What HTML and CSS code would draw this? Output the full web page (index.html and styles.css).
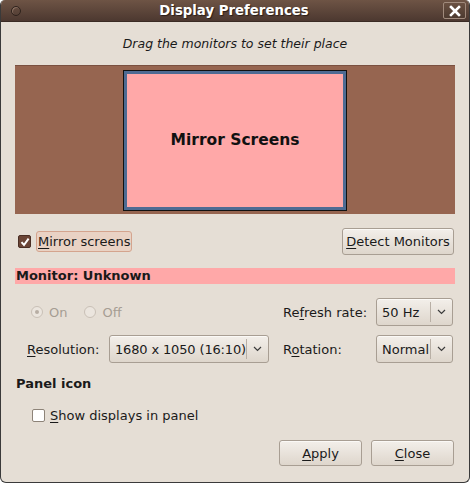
FILE: index.html
```html
<html>
<head>
<title>Display Preferences</title>
<link rel="stylesheet" href="styles.css">
</head>
<body>
<div class="window">
	<div class="titlebar">
		<span class="menu-dot"></span>
		<span class="title">Display Preferences</span>
		<span class="close-x">
			<svg width="12" height="12" viewBox="0 0 12 12"><path d="M2 2 L10 10 M10 2 L2 10" stroke="#fff" stroke-width="2.6" stroke-linecap="square"/></svg>
		</span>
	</div>
	<div class="content">
		<div class="hint">Drag the monitors to set their place</div>
		<div class="canvas">
			<div class="monitor"><div class="screen">Mirror Screens</div></div>
		</div>
		<div class="row-top">
			<label class="check">
				<span class="box checked">
					<svg width="10" height="10" viewBox="0 0 10 10"><path d="M1.5 5.2 L4 8 L8.6 1.6" stroke="#fff" stroke-width="2" fill="none"/></svg>
				</span>
				<span class="focus-ring"><u>M</u>irror screens</span>
			</label>
			<button class="btn detect"><u>D</u>etect Monitors</button>
		</div>
		<div class="monitor-name">Monitor: Unknown</div>
		<div class="grid">
			<div class="radios">
				<span class="radio on"></span><span class="dim">On</span>
				<span class="radio"></span><span class="dim">Off</span>
			</div>
			<div class="lbl right">Re<u>f</u>resh rate:</div>
			<div class="combo"><span class="val">50 Hz</span><span class="arrow"><svg width="9" height="6" viewBox="0 0 9 6"><path d="M1 1 L4.5 4.5 L8 1" stroke="#3c3c3c" stroke-width="1.2" fill="none"/></svg></span></div>

			<div class="lbl"><u>R</u>esolution:</div>
			<div class="combo"><span class="val tight">1680 x 1050 (16:10)</span><span class="arrow"><svg width="9" height="6" viewBox="0 0 9 6"><path d="M1 1 L4.5 4.5 L8 1" stroke="#3c3c3c" stroke-width="1.2" fill="none"/></svg></span></div>
			<div class="lbl right">R<u>o</u>tation:</div>
			<div class="combo"><span class="val">Normal</span><span class="arrow"><svg width="9" height="6" viewBox="0 0 9 6"><path d="M1 1 L4.5 4.5 L8 1" stroke="#3c3c3c" stroke-width="1.2" fill="none"/></svg></span></div>
		</div>
		<div class="section">Panel icon</div>
		<label class="check indent">
			<span class="box"></span>
			<span><u>S</u>how displays in panel</span>
		</label>
		<div class="actions">
			<button class="btn action"><u>A</u>pply</button>
			<button class="btn action"><u>C</u>lose</button>
		</div>
	</div>
</div>
</body>
</html>
```

FILE: styles.css
```css
body {
	margin: 0;
	font-family: "DejaVu Sans", sans-serif;
	font-size: 13px;
	color: #1a1a1a;
	background: #fff;
}
u {
	text-decoration: underline;
	text-underline-offset: 2px;
}
.window {
	width: 470px;
	height: 483px;
	box-sizing: border-box;
	background: #e5ded5;
	border: 1px solid #3a3a3a;
	border-top: 0;
	border-radius: 5px 5px 6px 6px;
	overflow: hidden;
	display: flex;
	flex-direction: column;
}
.titlebar {
	height: 22px;
	flex: none;
	background: linear-gradient(#6e5445, #4c3830);
	border-bottom: 1px solid #3a2b24;
	box-sizing: border-box;
	display: flex;
	align-items: center;
}
.menu-dot {
	width: 8px;
	height: 8px;
	border-radius: 50%;
	border: 1px solid #2e221c;
	box-shadow: inset 1px 1px 0 #8c7263;
	margin-left: 10px;
}
.title {
	flex: 1;
	text-align: center;
	color: #fff;
	font-weight: bold;
	font-size: 13.3px;
	text-shadow: 1px 1px 1px #2a1d17;
	margin-left: 4px;
}
.close-x {
	width: 21px;
	height: 15px;
	border: 1px solid #a08a7c;
	border-radius: 2px;
	background: linear-gradient(#6a5142, #4d3a30);
	display: flex;
	align-items: center;
	justify-content: center;
	margin-right: 3px;
}
.content {
	padding: 0 14px;
	display: flex;
	flex-direction: column;
}
.hint {
	margin-top: 14px;
	height: 16px;
	line-height: 16px;
	text-align: center;
	font-style: italic;
	font-size: 12.5px;
}
.canvas {
	margin-top: 13px;
	height: 149px;
	background: #966550;
	border-top: 1px solid #7a5040;
	box-sizing: border-box;
	display: flex;
	justify-content: center;
	align-items: center;
}
.monitor {
	width: 224px;
	height: 141px;
	box-sizing: border-box;
	border: 1px solid #111;
	background: #4e6b93;
	padding: 3px;
}
.screen {
	height: 100%;
	background: #ffa8a8;
	display: flex;
	align-items: center;
	justify-content: center;
	font-weight: bold;
	font-size: 15.5px;
	color: #111;
}
.row-top {
	margin-top: 14px;
	height: 26px;
	display: flex;
	align-items: center;
	justify-content: space-between;
}
.check {
	display: flex;
	align-items: center;
	gap: 5px;
}
.box {
	width: 11px;
	height: 11px;
	border: 1px solid #8d8378;
	border-radius: 2px;
	background: #fff;
	display: flex;
	align-items: center;
	justify-content: center;
}
.box.checked {
	background: #6b4536;
	border-color: #4a2e24;
}
.row-top .check {
	padding-left: 3px;
	margin-top: 1px;
}
.focus-ring {
	background: #e9d2c4;
	border: 1px solid #d4a48e;
	border-radius: 3px;
	padding: 1px;
	line-height: 17px;
}
.btn {
	font-family: "DejaVu Sans", sans-serif;
	font-size: 13px;
	color: #1a1a1a;
	background: linear-gradient(#f3efea, #ded6cc);
	border: 1px solid #a89e93;
	border-radius: 3px;
	height: 27px;
	padding: 0;
	box-shadow: inset 0 1px 0 #fbf9f6;
}
.detect {
	width: 112px;
	margin-right: 1px;
}
.monitor-name {
	margin-top: 14px;
	height: 16px;
	line-height: 16px;
	background: #ffa8a8;
	font-weight: bold;
	padding-left: 1px;
}
.grid {
	margin-top: 14px;
	padding-left: 12px;
	display: grid;
	grid-template-columns: 82px 160px 107px 77px;
	row-gap: 9px;
	align-items: center;
}
.lbl {
	white-space: nowrap;
}
.lbl.right {
	padding-left: 14px;
}
.radios {
	grid-column: span 2;
	display: flex;
	align-items: center;
	padding-left: 4px;
	gap: 6px;
}
.radio {
	width: 10px;
	height: 10px;
	border-radius: 50%;
	border: 1px solid #c9c0b6;
	background: #ebe5de;
	display: inline-flex;
	align-items: center;
	justify-content: center;
}
.radio.on::after {
	content: "";
	width: 4px;
	height: 4px;
	border-radius: 50%;
	background: #b8aea4;
}
.dim {
	color: #a69d93;
	margin-right: 11px;
}
.combo {
	height: 28px;
	box-sizing: border-box;
	border: 1px solid #a89e93;
	border-radius: 3px;
	background: linear-gradient(#f3efea, #ded6cc);
	box-shadow: inset 0 1px 0 #fbf9f6;
	display: flex;
	align-items: center;
}
.combo .val {
	flex: 1;
	padding-left: 5px;
	white-space: nowrap;
}
.combo .val.tight {
	letter-spacing: -0.15px;
}
.combo .arrow {
	width: 21px;
	height: 20px;
	border-left: 1px solid #b8afa5;
	display: flex;
	align-items: center;
	justify-content: center;
}
.section {
	margin-top: 13px;
	height: 16px;
	line-height: 16px;
	font-weight: bold;
	padding-left: 1px;
}
.indent {
	margin-top: 15px;
	height: 16px;
	padding-left: 17px;
}
.actions {
	margin-top: 17px;
	display: flex;
	justify-content: flex-end;
	gap: 9px;
	padding-right: 1px;
}
.action {
	width: 83px;
	height: 26px;
}
```
